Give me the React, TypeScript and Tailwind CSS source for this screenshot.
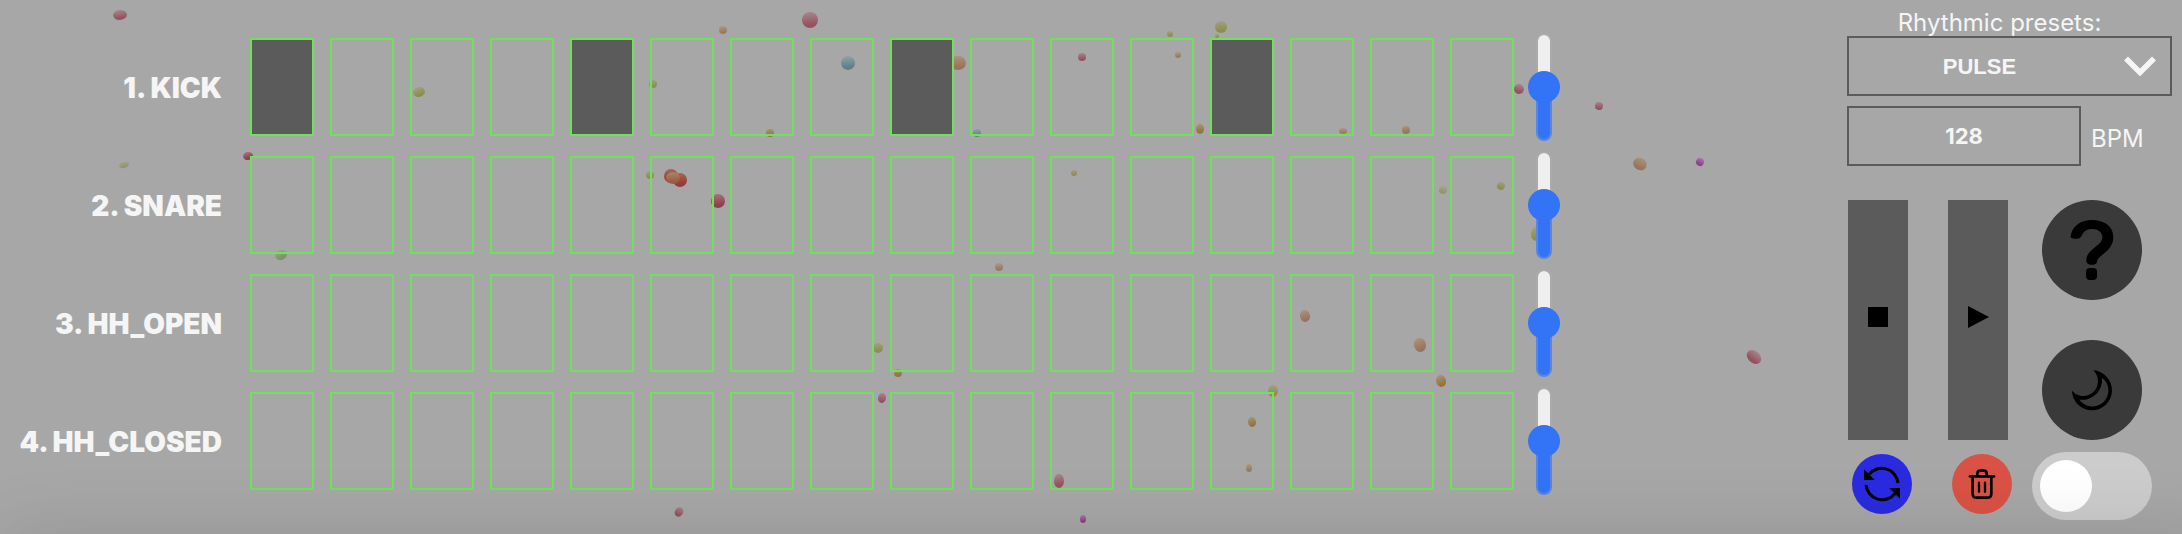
import { useState } from "react";
import type { CSSProperties } from "react";

type Ball = [x: number, y: number, rx: number, ry: number, tilt: number, tone: string];

const TONES: Record<string, [string, string]> = {
  pink: ["#a58087", "#94525f"],
  red: ["#a36d74", "#8e3f4d"],
  brick: ["#a9604f", "#983a35"],
  copper: ["#a98266", "#9b5b43"],
  brown: ["#a79079", "#99745a"],
  tan: ["#a79685", "#977a60"],
  amber: ["#a39272", "#947440"],
  olive: ["#9f9f78", "#8c8f4c"],
  moss: ["#a2a28a", "#94956a"],
  green: ["#97a488", "#7b9466"],
  teal: ["#8c9ea3", "#607f8a"],
  purple: ["#a573a2", "#8f3c8a"],
};

const BALLS: Ball[] = [
  [120, 15, 7, 5, -5, "pink"],
  [419, 92, 6, 5, -15, "olive"],
  [248, 156, 5, 4, -10, "red"],
  [124, 165, 5, 3, -15, "moss"],
  [281, 255, 6, 5, -20, "green"],
  [723, 30, 4, 4, 0, "tan"],
  [810, 20, 8, 8, 0, "pink"],
  [848, 63, 7, 7, 0, "teal"],
  [653, 84, 4, 4, 0, "olive"],
  [958, 63, 8, 7, 0, "brown"],
  [977, 133, 4, 4, 0, "teal"],
  [770, 133, 4, 4, 0, "amber"],
  [650, 175, 4, 4, 0, "olive"],
  [671, 176, 7, 7, 0, "brick"],
  [680, 180, 7, 7, 0, "brick"],
  [673, 178, 7, 6, 0, "copper"],
  [718, 201, 7, 7, 0, "red"],
  [999, 267, 4, 4, 0, "tan"],
  [1082, 57, 4, 4, 0, "pink"],
  [1170, 34, 3, 3, 0, "olive"],
  [1221, 27, 6, 6, 0, "olive"],
  [1217, 36, 2, 2, 0, "olive"],
  [1178, 55, 3, 3, 0, "tan"],
  [1200, 129, 4, 5, 0, "amber"],
  [1343, 131, 4, 3, 0, "tan"],
  [1406, 130, 4, 4, 0, "brown"],
  [1519, 89, 5, 5, 20, "pink"],
  [1599, 106, 4, 4, 10, "pink"],
  [1074, 173, 3, 3, 0, "olive"],
  [1443, 190, 4, 4, 20, "moss"],
  [1501, 186, 4, 4, 20, "olive"],
  [1536, 234, 5, 7, 0, "olive"],
  [1640, 164, 7, 6, 30, "brown"],
  [1700, 162, 4, 4, 30, "purple"],
  [1754, 357, 8, 6, 40, "pink"],
  [1305, 316, 5, 6, -10, "brown"],
  [1420, 345, 6, 7, -15, "brown"],
  [1441, 381, 5, 6, -15, "amber"],
  [1273, 391, 5, 6, 0, "olive"],
  [1252, 422, 4, 5, -10, "amber"],
  [1249, 468, 3, 4, 0, "tan"],
  [1059, 481, 5, 7, 0, "pink"],
  [1083, 519, 3, 4, 0, "purple"],
  [878, 348, 5, 5, 0, "olive"],
  [898, 373, 4, 4, 0, "amber"],
  [882, 398, 4, 5, 10, "pink"],
  [679, 512, 4, 5, 30, "pink"],
];

const TRACKS = ["1. KICK", "2. SNARE", "3. HH_OPEN", "4. HH_CLOSED"];
const STEPS = Array.from({ length: 16 }, (_, i) => i);

function FloatingBalls() {
  return (
    <svg className="pointer-events-none absolute inset-0 h-full w-full" aria-hidden="true">
      <defs>
        {Object.entries(TONES).map(([name, [top, bottom]]) => (
          <linearGradient key={name} id={`tone-${name}`} x1="0.4" y1="0" x2="0.5" y2="1">
            <stop offset="0.1" stopColor={top} />
            <stop offset="0.8" stopColor={bottom} />
          </linearGradient>
        ))}
      </defs>
      {BALLS.map(([x, y, rx, ry, tilt, tone], i) => (
        <ellipse
          key={i}
          cx={x}
          cy={y}
          rx={rx}
          ry={ry}
          transform={`rotate(${tilt} ${x} ${y})`}
          fill={`url(#tone-${tone})`}
        />
      ))}
    </svg>
  );
}

function VolumeSlider({ label }: { label: string }) {
  const [value, setValue] = useState(50);
  return (
    <input
      type="range"
      aria-label={`${label} volume`}
      value={value}
      onChange={(e) => setValue(Number(e.target.value))}
      style={{ "--fill": `${value}%` } as CSSProperties}
      className="h-[108px] w-4 cursor-pointer appearance-none bg-transparent [direction:rtl] [writing-mode:vertical-lr] [&::-webkit-slider-runnable-track]:box-border [&::-webkit-slider-runnable-track]:h-full [&::-webkit-slider-runnable-track]:w-4 [&::-webkit-slider-runnable-track]:rounded-full [&::-webkit-slider-runnable-track]:border-2 [&::-webkit-slider-runnable-track]:border-[#b4b4b44d] [&::-webkit-slider-runnable-track]:[background-clip:border-box,padding-box] [&::-webkit-slider-runnable-track]:[background-image:linear-gradient(to_top,#3373f6_var(--fill),transparent_var(--fill)),linear-gradient(#efefef,#efefef)] [&::-webkit-slider-runnable-track]:[background-origin:border-box] [&::-webkit-slider-thumb]:-ml-[10px] [&::-webkit-slider-thumb]:size-8 [&::-webkit-slider-thumb]:appearance-none [&::-webkit-slider-thumb]:rounded-full [&::-webkit-slider-thumb]:bg-[#3373f6]"
    />
  );
}

function TrackRow({ label, initial }: { label: string; initial: number[] }) {
  const [active, setActive] = useState(initial);
  const toggle = (step: number) =>
    setActive((now) => (now.includes(step) ? now.filter((s) => s !== step) : [...now, step]));
  return (
    <div className="flex h-[98px] items-center">
      <h2 className="w-[222px] shrink-0 pt-0.5 text-right text-[28px] leading-8 font-black whitespace-nowrap">
        {label}
      </h2>
      <div className="ml-7 flex h-full gap-4">
        {STEPS.map((step) => (
          <button
            key={step}
            type="button"
            aria-label={`${label} step ${step + 1}`}
            aria-pressed={active.includes(step)}
            onClick={() => toggle(step)}
            className="h-full w-16 border-2 border-[#6fe25b] aria-pressed:bg-[#5b5b5b]"
          />
        ))}
      </div>
      <div className="ml-[22px] flex items-center">
        <VolumeSlider label={label} />
      </div>
    </div>
  );
}

function HelpIcon() {
  return (
    <svg viewBox="0 0 300 300" className="size-full" aria-hidden="true">
      <path
        d="M86 108C90 80 114 60 150 60C188 60 214 80 214 111C214 133 202 148 184 162C169 174 166 178 165 186C163 198 133 198 133 182C133 164 143 154 160 141C174 130 181 123 181 112C181 96 168 87 150 87C134 87 125 94 119 107C116 114 110 117 102 116C92 115 85 115 86 108Z"
      />
      <rect x="132" y="204" width="33" height="36" rx="11" />
    </svg>
  );
}

function MoonIcon() {
  return (
    <svg viewBox="0 0 300 300" className="size-full" aria-hidden="true">
      <path
        fillRule="evenodd"
        d="M154 91A60 60 0 1 1 90 152A44 44 0 0 0 168 125Q168 106 154 91ZM180 113A48 48 0 1 1 112 179A60 60 0 0 0 180 113Z"
      />
    </svg>
  );
}

function SyncIcon() {
  return (
    <svg viewBox="0 0 180 180" className="size-full" aria-hidden="true">
      <g fill="none" stroke="#000" strokeWidth="9">
        <path d="M138 87A49 49 0 0 0 51 61" />
        <path d="M42 93A49 49 0 0 0 129 119" />
      </g>
      <path d="M36 46V78H68ZM144 134V102H112Z" />
    </svg>
  );
}

function TrashIcon() {
  return (
    <svg viewBox="0 0 180 180" className="size-full" aria-hidden="true">
      <g fill="none" stroke="#000" strokeWidth="8" strokeLinecap="round">
        <path d="M54 67H126" />
        <path d="M76 66V59Q76 50 85 50H95Q104 50 104 59V66" />
        <path d="M62 68V119Q62 131 74 131H106Q118 131 118 119V68" />
        <path d="M81 86V113M99 86V113" strokeWidth="7" />
      </g>
    </svg>
  );
}

function ControlPanel() {
  const [bpm, setBpm] = useState("128");
  const [preset, setPreset] = useState("PULSE");
  return (
    <section className="w-[325px] shrink-0 pt-[10px]" aria-label="Controls">
      <label htmlFor="preset" className="block pr-5 text-center text-2xl leading-[26px]">
        Rhythmic presets:
      </label>
      <div className="relative">
        <select
          id="preset"
          value={preset}
          onChange={(e) => setPreset(e.target.value)}
          className="h-[60px] w-full appearance-none border-2 border-[#5b5b5b] bg-transparent pr-[60px] text-center font-['Liberation_Sans',sans-serif] text-[22px] font-bold [text-align-last:center]"
        >
          <option>PULSE</option>
        </select>
        <svg
          viewBox="0 0 32 20"
          className="pointer-events-none absolute top-5 right-4 h-5 w-8"
          aria-hidden="true"
        >
          <path d="M2 2.5L16 16.5L30 2.5" fill="none" stroke="#f5f5f5" strokeWidth="5.5" />
        </svg>
      </div>
      <div className="mt-[10px] flex items-center gap-[10px]">
        <input
          id="bpm"
          type="text"
          inputMode="numeric"
          value={bpm}
          onChange={(e) => setBpm(e.target.value)}
          className="h-[60px] w-[234px] border-2 border-[#5b5b5b] bg-transparent text-center text-[22px] font-bold"
        />
        <label htmlFor="bpm" className="pt-1.5 text-2xl leading-7">
          BPM
        </label>
      </div>
      <div className="mt-[34px] flex h-60 pl-px">
        <button type="button" aria-label="Stop" className="flex w-[60px] items-center justify-center bg-[#5b5b5b] pb-1.5">
          <svg viewBox="0 0 20 20" className="size-5" aria-hidden="true">
            <rect width="20" height="20" />
          </svg>
        </button>
        <button type="button" aria-label="Play" className="ml-10 flex w-[60px] items-center justify-center bg-[#5b5b5b] pb-1.5">
          <svg viewBox="0 0 22 22" className="size-[22px]" aria-hidden="true">
            <path d="M1 0L22 11L1 22Z" />
          </svg>
        </button>
        <div className="ml-[34px] flex flex-col justify-between">
          <button type="button" aria-label="Help" className="size-[100px] rounded-full bg-[#3a3a3a]">
            <HelpIcon />
          </button>
          <button type="button" aria-label="Dark mode" className="size-[100px] rounded-full bg-[#3a3a3a]">
            <MoonIcon />
          </button>
        </div>
      </div>
      <div className="mt-3 flex items-start pl-[5px]">
        <button type="button" aria-label="Reload" className="mt-0.5 size-[60px] rounded-full bg-[#2a2be0]">
          <SyncIcon />
        </button>
        <button type="button" aria-label="Clear" className="mt-0.5 ml-10 size-[60px] rounded-full bg-[#d95245]">
          <TrashIcon />
        </button>
        <label className="ml-5 flex h-[68px] w-[120px] cursor-pointer items-center rounded-full bg-[#cccccc] p-2">
          <input type="checkbox" className="peer sr-only" aria-label="Toggle background" />
          <span className="size-[52px] rounded-full bg-white peer-checked:ml-auto" />
        </label>
      </div>
    </section>
  );
}

export default function App() {
  return (
    <main className="relative flex min-h-screen items-start justify-between overflow-hidden bg-[#a7a7a7] font-['Inter',sans-serif] text-[#f5f5f5]">
      <FloatingBalls />
      <section className="relative flex flex-col gap-5 pt-[38px]" aria-label="Sequencer">
        {TRACKS.map((label, i) => (
          <TrackRow key={label} label={label} initial={i === 0 ? [0, 4, 8, 12] : []} />
        ))}
      </section>
      <div className="relative pr-[10px]">
        <ControlPanel />
      </div>
      <div className="pointer-events-none absolute -right-10 left-0 top-full h-40 shadow-[0_0_72px_rgba(0,0,0,0.12)]" />
    </main>
  );
}
